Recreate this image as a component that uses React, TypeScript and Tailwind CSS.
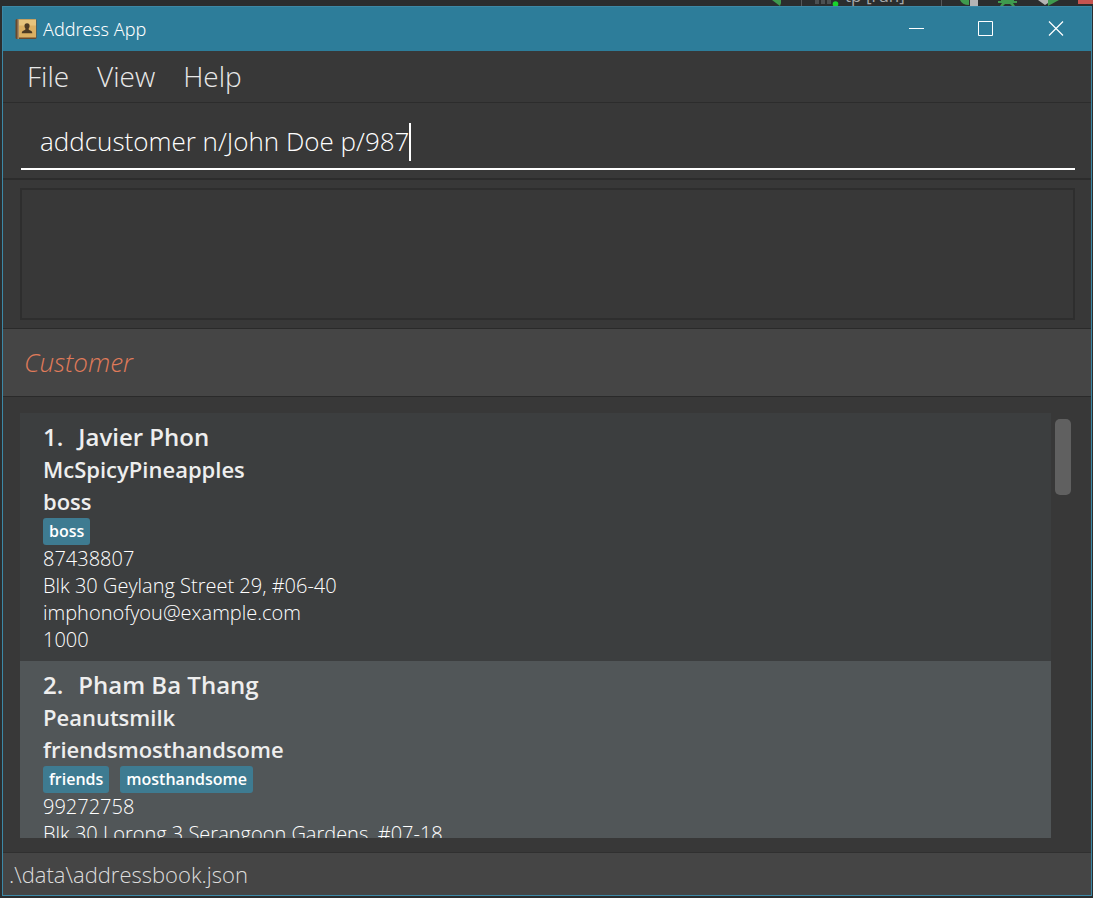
import { useState } from "react";

type Customer = {
  name: string;
  company: string;
  summary: string;
  tags: string[];
  phone: string;
  address: string;
  email: string;
  points: string;
};

const customers: Customer[] = [
  {
    name: "Javier Phon",
    company: "McSpicyPineapples",
    summary: "boss",
    tags: ["boss"],
    phone: "87438807",
    address: "Blk 30 Geylang Street 29, #06-40",
    email: "imphonofyou@example.com",
    points: "1000",
  },
  {
    name: "Pham Ba Thang",
    company: "Peanutsmilk",
    summary: "friendsmosthandsome",
    tags: ["friends", "mosthandsome"],
    phone: "99272758",
    address: "Blk 30 Lorong 3 Serangoon Gardens, #07-18",
    email: "",
    points: "",
  },
];

function BookIcon() {
  return (
    <svg width="22" height="22" viewBox="0 0 22 22" aria-hidden="true">
      <rect x="0.5" y="1" width="21" height="20" rx="1.5" fill="#6b4a2c" />
      <rect x="3.5" y="1.5" width="17.5" height="18" fill="#dbb062" />
      <rect x="3.5" y="1.5" width="17.5" height="6" fill="#e6c47c" />
      <rect x="2.5" y="1" width="1.5" height="20" fill="#a58a68" />
      <path
        d="M12 5.2c1.8 0 2.8 1.3 2.6 3-.1 1.200-.7 1.800-1 2.500 0 .9.400 1.300 1.200 1.600 1.500.5 2.500.9 2.500 2.900H6.800c0-2 1-2.400 2.500-2.900.8-.3 1.200-.7 1.200-1.600-.4-.7-.9-1.300-1-2.500-.2-1.700.8-3 2.500-3z"
        fill="#4d3b23"
      />
    </svg>
  );
}

function BackgroundToolbar() {
  return (
    <div className="flex h-[6px] shrink-0 items-end justify-end overflow-hidden">
      <svg width="75" height="6" viewBox="0 0 75 6" aria-hidden="true">
        <path d="M2 0h9v3l-1 3z" fill="#3f9a4e" />
        <path d="M31.500 0v6" stroke="#55585a" />
        <path d="M45 0h4v4h-4zM51 0h4v4h-4zM57 0h4v4h-4z" fill="#4c5052" />
        <circle cx="65.500" cy="4" r="2.800" fill="#17d52c" />
      </svg>
      <span className="w-[60px] text-[17px] leading-5 whitespace-nowrap text-[#a5a8aa]">tp [run]</span>
      <svg width="188" height="6" viewBox="0 0 188 6" aria-hidden="true">
        <path d="M36.500 0v6" stroke="#55585a" />
        <path d="M55 0q2 5 9 5V0z" fill="#3f9a4e" />
        <path d="M65 0h8v6h-8z" fill="#b4b4b4" />
        <path d="M96 0h13v1h3v2h-4l2 3h-3l-2-2h-5l-2 2h-3l2-3h-4V1h3z" fill="#3f9a4e" />
        <path d="M133 0l7 5 3-2V0z" fill="#b4b4b4" />
        <path d="M143 0h11l-11 6z" fill="#3f9a4e" />
        <path d="M173 0h15v4h-15z" fill="#c75450" />
      </svg>
    </div>
  );
}

function TitleBar() {
  return (
    <header className="flex h-11 shrink-0 items-center bg-[#2d7d9a] pl-3 text-white">
      <BookIcon />
      <h1 className="flex-1 pl-[6px] font-['Noto_Sans',sans-serif] text-lg font-light">
        Address App
      </h1>
      <button type="button" aria-label="Minimize" className="flex h-full w-[69px] items-center justify-center">
        <svg width="16" height="16" viewBox="0 0 16 16" fill="none" stroke="currentColor" aria-hidden="true">
          <path d="M0 7.500h15" />
        </svg>
      </button>
      <button type="button" aria-label="Maximize" className="flex h-full w-[69px] items-center justify-center">
        <svg width="16" height="16" viewBox="0 0 16 16" fill="none" stroke="currentColor" aria-hidden="true">
          <path d="M.500.500h14v14h-14z" />
        </svg>
      </button>
      <button type="button" aria-label="Close" className="flex h-full w-[71px] items-center justify-center">
        <svg width="16" height="16" viewBox="0 0 16 16" fill="none" stroke="currentColor" strokeWidth="1.200" aria-hidden="true">
          <path d="M1 .500l14 14M15 .500l-14 14" />
        </svg>
      </button>
    </header>
  );
}

function CustomerCard({ customer, index }: { customer: Customer; index: number }) {
  return (
    <li
      className={
        "h-[248px] shrink-0 px-[23px] pt-2 text-[#eeeeee] " +
        (index % 2 === 0 ? "bg-[#3c3e3f]" : "bg-[#515658]")
      }
    >
      <h3 className="flex gap-[15px] text-2xl leading-8 font-semibold">
        <span>{index + 1}.</span>
        <span>{customer.name}</span>
      </h3>
      <p className="text-[22px] leading-8 font-semibold">{customer.company}</p>
      <p className="text-[22px] leading-8 font-semibold">{customer.summary}</p>
      <ul className="flex gap-[11px] pt-px">
        {customer.tags.map((tag) => (
          <li
            key={tag}
            className="rounded-[3px] bg-[#3e7b91] px-1.5 text-base leading-[27px] font-semibold text-white"
          >
            {tag}
          </li>
        ))}
      </ul>
      <div className="text-xl leading-[27px] font-light text-white">
        <p>{customer.phone}</p>
        <p>{customer.address}</p>
        <p>{customer.email}</p>
        <p>{customer.points}</p>
      </div>
    </li>
  );
}

export default function App() {
  const [command, setCommand] = useState("addcustomer n/John Doe p/987");

  return (
    <div className="flex h-screen flex-col bg-[#2b2d2e] pb-[2px] font-['Open_Sans',sans-serif]">
      <BackgroundToolbar />
      <div className="mr-px ml-[2px] flex min-h-0 flex-1 flex-col border border-[#3c88a6] bg-[#383838]">
        <TitleBar />
        <nav className="flex h-[51px] shrink-0 items-center gap-7 pb-0.5 pl-6 text-[28px] leading-10 font-light text-[#e8e8e8]">
          <button type="button">File</button>
          <button type="button">View</button>
          <button type="button">Help</button>
        </nav>

        <section className="h-[78px] shrink-0 border-t border-b-2 border-[#2c2c2c] pr-4 pl-[18px]">
          <label className="flex h-[67px] items-center border-b-2 border-white pt-3 pl-[19px]">
            <input
              type="text"
              aria-label="Command"
              value={command}
              onChange={(event) => setCommand(event.target.value)}
              className="max-w-full bg-transparent text-[26px] font-light text-white caret-transparent outline-none [field-sizing:content]"
            />
            <span className="h-[38px] w-[2px] shrink-0 bg-white" />
          </label>
        </section>

        <section className="h-[148px] shrink-0 pt-2 pr-4 pb-2 pl-[17px]">
          <output aria-label="Result" className="block h-[132px] border-2 border-[#2e2e2e]" />
        </section>

        <section className="flex h-[69px] shrink-0 items-center border-y border-[#2a2a2a] bg-[#454545] pb-0.5 pl-[21px]">
          <h2 className="text-[26px] leading-10 font-light text-[#e07b5a] italic">Customer</h2>
        </section>

        <main className="flex min-h-0 flex-1 gap-1 pt-4 pr-5 pb-[14px] pl-[17px]">
          <ol className="flex min-w-0 flex-1 flex-col overflow-hidden">
            {customers.map((customer, index) => (
              <CustomerCard key={customer.name} customer={customer} index={index} />
            ))}
          </ol>
          <div className="w-4 pt-[6px]">
            <div className="h-[76px] rounded-[5px] bg-[#606060]" />
          </div>
        </main>

        <footer className="flex h-[43px] shrink-0 items-center border-t border-[#303030] bg-[#454545] pl-[6px] text-[22px] font-light text-[#dddddd]">
          .\data\addressbook.json
        </footer>
      </div>
    </div>
  );
}
